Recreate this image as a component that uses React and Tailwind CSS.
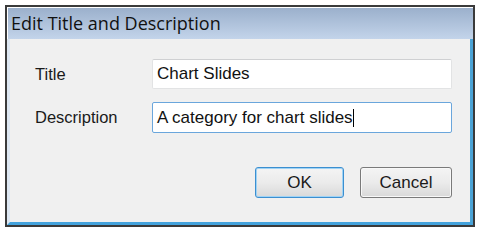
import React from 'react';

const Field = ({ label, value, focused }) => (
  <div className="flex items-center">
    <div className="w-[117px] text-[16.5px] text-[#1a1a1a]">{label}</div>
    <div
      className={
        focused
          ? 'w-[300px] h-[31px] bg-white border border-[#6aa6dc] rounded-[2px] flex items-center pl-[4px]'
          : 'w-[300px] h-[30px] bg-white border border-[#e2e3e4] border-t-[#cfd0d2] rounded-[2px] flex items-center pl-[4px]'
      }
    >
      <span className="text-[17px] text-[#111]">{value}</span>
      {focused && <span className="w-[1px] h-[18px] bg-black"></span>}
    </div>
  </div>
);

const Button = ({ children, primary, width }) => (
  <button
    className={`${width} h-[31px] rounded-[3px] border ${
      primary ? 'border-[#3c8fd0] shadow-[inset_0_0_0_1px_#9fd3f5]' : 'border-[#7a7a7a] shadow-[inset_0_0_0_1px_#f8f8f8]'
    } bg-gradient-to-b from-[#f4f4f4] via-[#ebebeb] to-[#d9d9d9] text-[17px] text-[#1a1a1a] flex items-center justify-center`}
  >
    {children}
  </button>
);

export default function App() {
  return (
    <div className="bg-white h-[245px] w-[483px] pt-[5px] pl-[5px]" style={{ fontFamily: '"Liberation Sans", Arial, sans-serif' }}>
      <div className="w-[470px] h-[222px] border-2 border-[#3a3a3a] flex flex-col">
        <div className="h-[32px] bg-gradient-to-b from-[#9bb0cc] to-[#c3d4ea] border-t border-l border-white flex items-center pl-[3px]">
          <span className="text-[18px] text-[#111]" style={{ fontFamily: '"Open Sans", sans-serif' }}>
            Edit Title and Description
          </span>
        </div>
        <div className="flex-1 bg-[#f0f0f0] border-l-[3px] border-l-[#dde7f2] border-r-[3px] border-r-[#4aa3d6] border-b-[3px] border-b-[#43a2dc] flex flex-col pl-[25px] pr-[16px] pt-[20px]">
          <div className="flex flex-col gap-[13px]">
            <Field label="Title" value="Chart Slides" />
            <Field label="Description" value="A category for chart slides" focused />
          </div>
          <div className="flex justify-end gap-[16px] mt-[34px] pr-[2px]">
            <Button primary width="w-[89px]">OK</Button>
            <Button width="w-[92px]">Cancel</Button>
          </div>
        </div>
      </div>
    </div>
  );
}
